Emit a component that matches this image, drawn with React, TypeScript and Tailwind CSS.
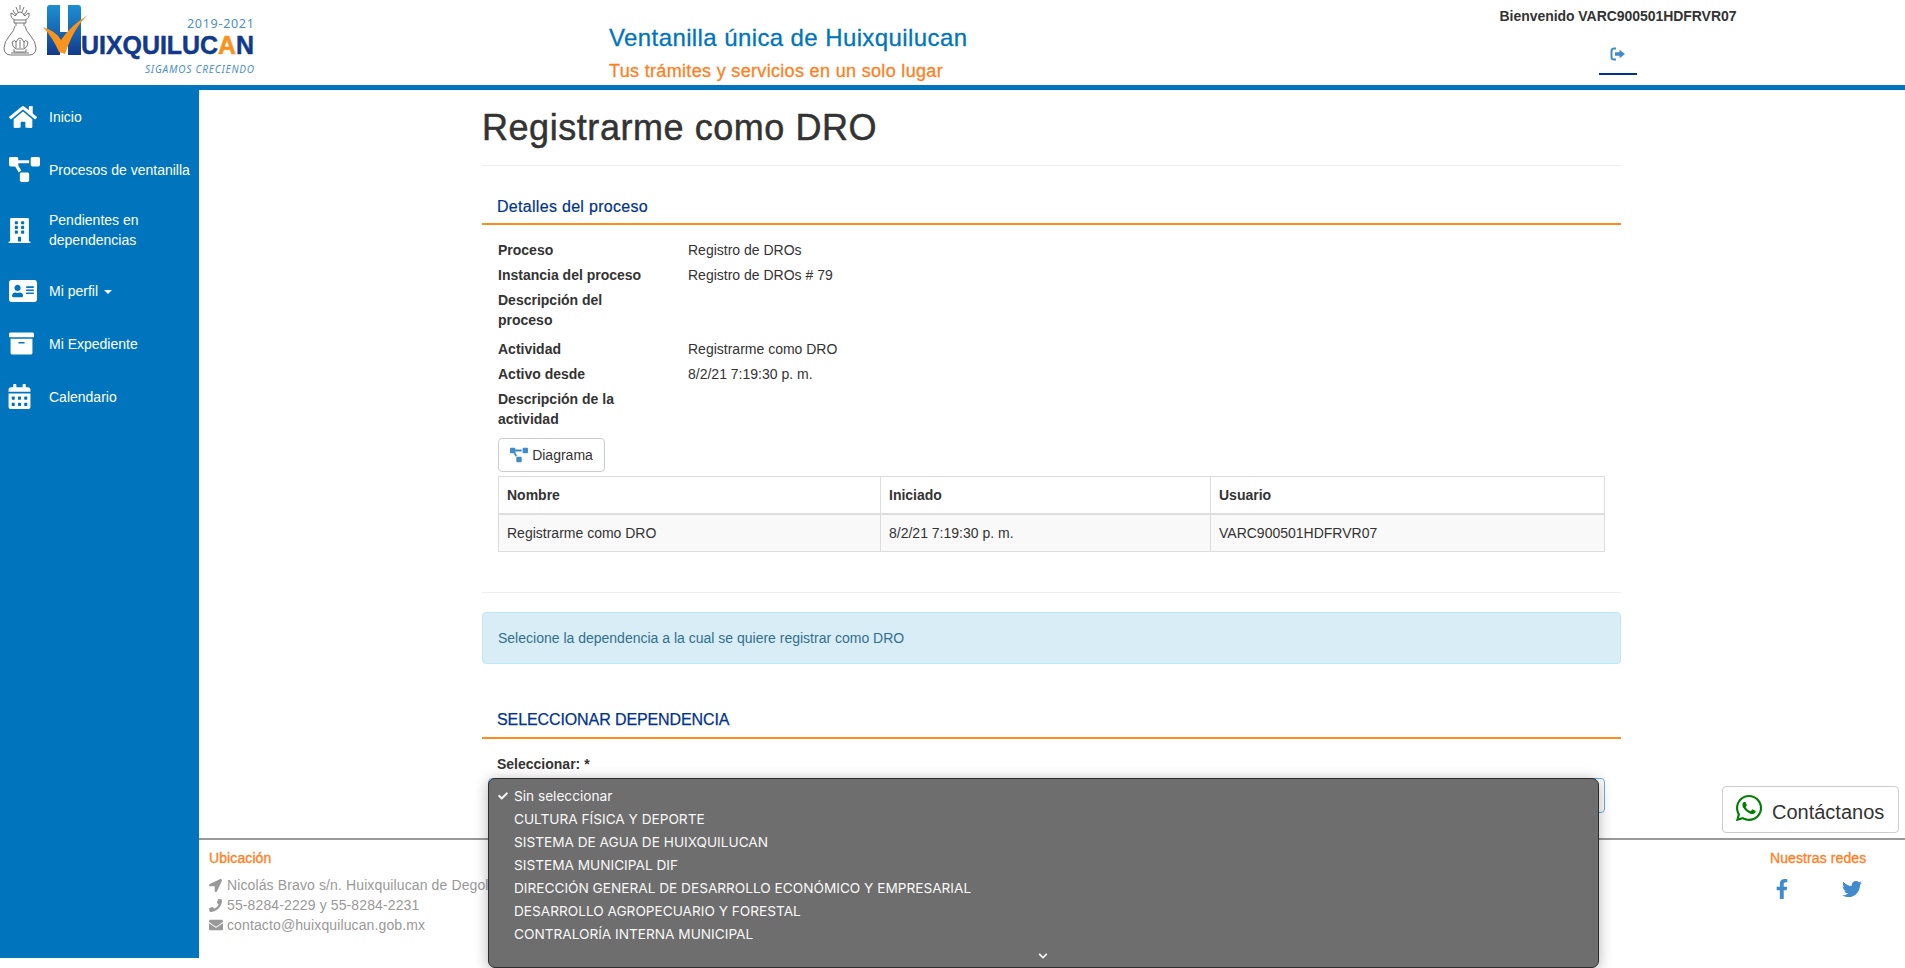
import React from "react";
import { FaHome, FaProjectDiagram, FaBuilding, FaAddressCard, FaArchive, FaCalendarAlt, FaLocationArrow, FaPhone, FaEnvelope, FaFacebookF, FaTwitter, FaWhatsapp, FaCheck, FaChevronDown } from "react-icons/fa";

function Logo() {
  return (
    <svg width="262" height="78" viewBox="0 0 262 78" className="block">
      <defs>
        <linearGradient id="hb" x1="0" y1="0" x2="0" y2="1">
          <stop offset="0" stopColor="#1b8fd2" />
          <stop offset="0.5" stopColor="#1769b4" />
          <stop offset="1" stopColor="#123a8c" />
        </linearGradient>
      </defs>
      <g fill="none" stroke="#666" strokeWidth="0.9">
        <path d="M20 5 v5 M16 7 l2 5 M24 7 l-2 5 M13 10 q1 4 4 5 M27 10 q-1 4 -4 5" />
        <path d="M11 13 q-1 5 4 7 h10 q5-2 4-7 q-3 1-4 3 q-2-4-5-4 q-3 0-5 4 q-1-2-4-3z" />
        <path d="M14 20 v3 h12 v-3 M16 23 v3 M24 23 v3" />
        <path d="M15 26 q-1 5-5 9 q-6 7-6 13 q0 7 7 7 h18 q7 0 7-7 q0-6-6-13 q-4-4-5-9" />
        <path d="M12 42 q3-3 4 0 q2-4 4-4 q2 0 4 4 q1-3 4 0 q0 5-4 7 h-8 q-4-2-4-7z" />
        <path d="M14 49 v3 h12 v-3 M11 53 h18 M16 42 v6 M20 40 v8 M24 42 v6" />
      </g>
      <path d="M47 8 q0-3 3-3 h10 v27 h8 v-27 h10 q3 0 3 3 v47 h-13 v-12 h-8 v12 h-13 z" fill="url(#hb)" />
      <path d="M43 27 q13 4 18 13 q10-15 27-25 q-14 12-23 39 q-2-1-6-2 q-6-14-16-25z" fill="#f7941d" />
      <text x="187" y="28" fontFamily="'Noto Sans', sans-serif" fontSize="12.5" fill="#4a90cf" letterSpacing="0.7">2019-2021</text>
      <text x="81" y="54" fontFamily="'Liberation Sans', sans-serif" fontSize="25" fontWeight="700" fill="#123a8c" stroke="#123a8c" strokeWidth="0.5" textLength="173" lengthAdjust="spacingAndGlyphs">UIXQUILUC<tspan fill="#f7941d" stroke="#f7941d">A</tspan>N</text>
      <text x="145" y="73" fontFamily="'Noto Sans', sans-serif" fontSize="10" fontStyle="italic" fill="#4a90cf" textLength="109">SIGAMOS CRECIENDO</text>
    </svg>
  );
}

function SignOut() {
  return (
    <svg width="16" height="14" viewBox="0 0 16 14" className="block">
      <path d="M6 1.5 H4 Q1.5 1.5 1.5 4 V10 Q1.5 12.5 4 12.5 H6" fill="none" stroke="#428bca" strokeWidth="2" />
      <path d="M5 5.3 H9.5 V2.8 L15 7 L9.5 11.2 V8.7 H5 Z" fill="#428bca" />
    </svg>
  );
}

const nav = [
  { icon: <FaHome size={28} />, label: "Inicio", h: "h-[53px]" },
  { icon: <FaProjectDiagram size={31} />, label: "Procesos de ventanilla", h: "h-[53px]" },
  { icon: <FaBuilding size={25} className="-ml-[2px]" />, label: "Pendientes en dependencias", h: "h-[68px]" },
  { icon: <FaAddressCard size={28} />, label: "Mi perfil", caret: true, h: "h-[53px]" },
  { icon: <FaArchive size={25} />, label: "Mi Expediente", h: "h-[53px]" },
  { icon: <FaCalendarAlt size={25} className="-ml-[2px]" />, label: "Calendario", h: "h-[53px]" },
];

const rows: [string, string, string][] = [
  ["Proceso", "Registro de DROs", "h-[25px]"],
  ["Instancia del proceso", "Registro de DROs # 79", "h-[25px]"],
  ["Descripción del proceso", "", "h-[49px]"],
  ["Actividad", "Registrarme como DRO", "h-[25px]"],
  ["Activo desde", "8/2/21 7:19:30 p. m.", "h-[25px]"],
  ["Descripción de la actividad", "", "h-[44px]"],
];

const options = [
  "CULTURA FÍSICA Y DEPORTE",
  "SISTEMA DE AGUA DE HUIXQUILUCAN",
  "SISTEMA MUNICIPAL DIF",
  "DIRECCIÓN GENERAL DE DESARROLLO ECONÓMICO Y EMPRESARIAL",
  "DESARROLLO AGROPECUARIO Y FORESTAL",
  "CONTRALORÍA INTERNA MUNICIPAL",
];

export default function App() {
  return (
    <div className="relative h-[968px] w-[1905px] overflow-hidden bg-white text-[14px] leading-[20px] text-[#333333] font-['Liberation_Sans',Arial,sans-serif]">
      <header className="flex h-[90px] border-b-[5px] border-[#0075be]">
        <div className="w-[609px]"><Logo /></div>
        <div className="w-[859px] pt-[21px]">
          <div className="text-[24px] leading-[34px] tracking-[0.4px] text-[#0075be] [-webkit-text-stroke:0.3px_#0075be]">Ventanilla única de Huixquilucan</div>
          <div className="mt-[3px] text-[18px] leading-[26px] tracking-[0.33px] text-[#ff7f1f] [-webkit-text-stroke:0.3px_#ff7f1f]">Tus trámites y servicios en un solo lugar</div>
        </div>
        <div className="flex w-[300px] flex-col items-center pt-[6px]">
          <div className="font-bold tracking-[-0.05px]">Bienvenido VARC900501HDFRVR07</div>
          <div className="mt-[20px] flex h-[29px] w-[38px] items-start justify-center border-b-2 border-[#00338d] pt-[1px]"><SignOut /></div>
        </div>
      </header>
      <div className="flex h-[878px]">
        <aside className="h-[868px] w-[199px] shrink-0 bg-[#0075be] text-white">
          {nav.map((n) => (
            <div key={n.label} className={"flex items-center " + n.h}>
              <div className="flex w-[49px] shrink-0 justify-start pl-[9px]">{n.icon}</div>
              <div className="flex-1 leading-[20px]">
                {n.label}
                {n.caret && <span className="ml-[6px] inline-block h-0 w-0 border-x-4 border-t-4 border-x-transparent border-t-white align-middle" />}
              </div>
            </div>
          ))}
        </aside>
        <div className="flex min-w-0 flex-1 flex-col">
          <main className="h-[748px] shrink-0 pl-[283px]">
            <div className="w-[1139px]">
              <h1 className="border-b border-[#eeeeee] pt-[14px] pb-[14px] text-[36px] leading-[47px] tracking-[0.55px] text-[#333333] [-webkit-text-stroke:0.5px_#333333]">Registrarme como DRO</h1>
              <h2 className="mt-[30px] border-b-2 border-[#ff8c1a] px-[15px] pb-[5px] text-[16px] leading-[22px] tracking-[0.3px] text-[#00338d] [-webkit-text-stroke:0.2px_#00338d]">Detalles del proceso</h2>
              <div className="px-[16px] pt-[15px]">
                {rows.map(([a, b, h]) => (
                  <div key={a} className={"flex " + h}>
                    <div className="w-[190px] pr-[30px] font-bold">{a}</div>
                    <div>{b}</div>
                  </div>
                ))}
                <button className="mt-[5px] flex h-[34px] w-[107px] items-center justify-center gap-[4px] rounded border border-[#cccccc] bg-white">
                  <FaProjectDiagram size={18} className="text-[#428bca]" /> Diagrama
                </button>
                <table className="mt-[4px] w-[1107px] table-fixed border-collapse border border-[#dddddd]">
                  <thead>
                    <tr className="h-[37px] border-b-2 border-[#dddddd] font-bold">
                      <th className="w-[382px] border-r border-[#dddddd] px-[8px] text-left">Nombre</th>
                      <th className="w-[330px] border-r border-[#dddddd] px-[8px] text-left">Iniciado</th>
                      <th className="px-[8px] text-left">Usuario</th>
                    </tr>
                  </thead>
                  <tbody>
                    <tr className="h-[38px] bg-[#f9f9f9]">
                      <td className="border-r border-[#dddddd] px-[8px]">Registrarme como DRO</td>
                      <td className="border-r border-[#dddddd] px-[8px]">8/2/21 7:19:30 p. m.</td>
                      <td className="px-[8px]">VARC900501HDFRVR07</td>
                    </tr>
                  </tbody>
                </table>
              </div>
              <hr className="mt-[40px] border-[#eeeeee]" />
              <div className="mt-[19px] flex h-[52px] items-center rounded border border-[#bce8f1] bg-[#d9edf7] px-[15px] text-[#31708f]">Selecione la dependencia a la cual se quiere registrar como DRO</div>
              <h2 className="mt-[45px] border-b-2 border-[#ff8c1a] px-[15px] pb-[6px] text-[16px] leading-[22px] tracking-[-0.1px] text-[#00338d] [-webkit-text-stroke:0.25px_#00338d]">SELECCIONAR DEPENDENCIA</h2>
              <div className="px-[15px] pt-[15px] font-bold">Seleccionar: *</div>
              <div className="mt-[4px] ml-[6px] h-[35px] w-[1117px] rounded border border-[#66afe9]" />
            </div>
          </main>
          <footer className="flex flex-1 border-t-2 border-[#999999] bg-white pl-[10px] pt-[8px]">
            <div className="w-[1561px]">
              <div className="text-[#ff7f1f] tracking-[0.1px] [-webkit-text-stroke:0.35px_#ff7f1f]">Ubicación</div>
              <div className="mt-[7px] text-[14px] tracking-[0.12px] text-[#999999]">
                <div className="flex h-[20px] items-center gap-[5px]"><FaLocationArrow size={13} /> Nicolás Bravo s/n. Huixquilucan de Degollado</div>
                <div className="flex h-[20px] items-center gap-[5px]"><FaPhone size={13} /> 55-8284-2229 y 55-8284-2231</div>
                <div className="flex h-[20px] items-center gap-[4px]"><FaEnvelope size={14} /> contacto@huixquilucan.gob.mx</div>
              </div>
            </div>
            <div className="w-[120px]">
              <div className="whitespace-nowrap text-[#ff7f1f] tracking-[0.1px] [-webkit-text-stroke:0.35px_#ff7f1f]">Nuestras redes</div>
              <div className="mt-[11px] flex items-center gap-[50px] pl-[2px] text-[#428bca]">
                <FaFacebookF size={20} />
                <FaTwitter size={20} />
              </div>
            </div>
          </footer>
        </div>
      </div>

      <div className="absolute top-[778px] left-[488px] h-[190px] w-[1111px] rounded-[7px] border border-[#2d2d2d] bg-[#6e6e6e] pt-[5px] text-[13.65px] text-[#f8f8f8] shadow-[0_2px_14px_rgba(0,0,0,0.3)] font-['Inter','Liberation_Sans',sans-serif]">
        <div className="relative flex h-[23px] items-center pl-[25px]">
          <FaCheck size={10} className="absolute left-[9px]" />Sin seleccionar
        </div>
        {options.map((o) => (
          <div key={o} className="flex h-[23px] items-center pl-[25px]">{o}</div>
        ))}
        <FaChevronDown size={10} className="absolute bottom-[6px] left-[549px]" />
      </div>

      <div className="absolute top-[786px] left-[1722px] flex h-[47px] w-[177px] items-center gap-[8px] rounded border border-[#cccccc] bg-white pl-[11px] text-[20px]">
        <FaWhatsapp size={30} className="mb-[4px] text-[#008000]" />
        <span className="mt-[5px]">Contáctanos</span>
      </div>
    </div>
  );
}
